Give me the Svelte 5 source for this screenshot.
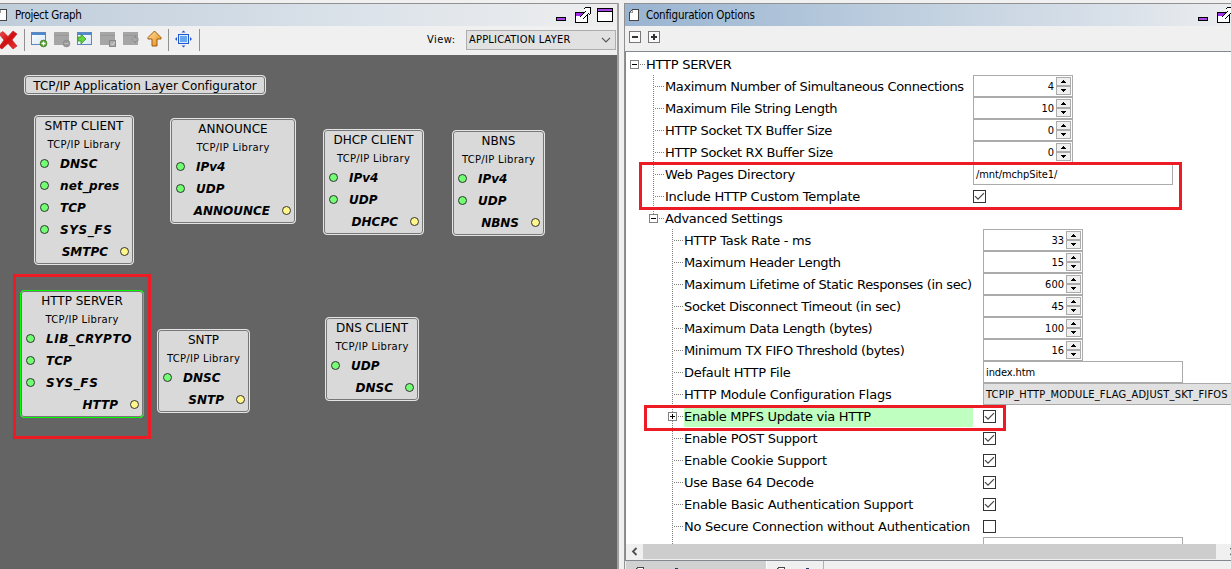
<script>
  const nodes = [
    { name: 'SMTP CLIENT', x: 34, y: 115, w: 100, h: 150, ins: ['DNSC', 'net_pres', 'TCP', 'SYS_FS'], out: 'SMTPC' },
    { name: 'ANNOUNCE', x: 170, y: 118, w: 126, h: 106, ins: ['IPv4', 'UDP'], out: 'ANNOUNCE' },
    { name: 'DHCP CLIENT', x: 323, y: 129, w: 101, h: 106, ins: ['IPv4', 'UDP'], out: 'DHCPC' },
    { name: 'NBNS', x: 452, y: 130, w: 93, h: 106, ins: ['IPv4', 'UDP'], out: 'NBNS' },
    { name: 'HTTP SERVER', x: 20, y: 290, w: 124, h: 128, ins: ['LIB_CRYPTO', 'TCP', 'SYS_FS'], out: 'HTTP', selected: true },
    { name: 'SNTP', x: 157, y: 329, w: 93, h: 84, ins: ['DNSC'], out: 'SNTP' },
    { name: 'DNS CLIENT', x: 325, y: 317, w: 94, h: 84, ins: ['UDP'], out: 'DNSC', satisfied: true }
  ];
  const rows = [
    { level: 0, label: 'HTTP SERVER', box: '-' },
    { level: 1, label: 'Maximum Number of Simultaneous Connections', kind: 'spin', value: '4', tight: true },
    { level: 1, label: 'Maximum File String Length', kind: 'spin', value: '10', tight: true },
    { level: 1, label: 'HTTP Socket TX Buffer Size', kind: 'spin', value: '0', tight: true },
    { level: 1, label: 'HTTP Socket RX Buffer Size', kind: 'spin', value: '0', tight: true },
    { level: 1, label: 'Web Pages Directory', kind: 'text', value: '/mnt/mchpSite1/' },
    { level: 1, label: 'Include HTTP Custom Template', kind: 'check', value: true },
    { level: 1, label: 'Advanced Settings', box: '-', last: true },
    { level: 2, label: 'HTTP Task Rate - ms', kind: 'spin', value: '33' },
    { level: 2, label: 'Maximum Header Length', kind: 'spin', value: '15', tight: true },
    { level: 2, label: 'Maximum Lifetime of Static Responses (in sec)', kind: 'spin', value: '600', tight: true },
    { level: 2, label: 'Socket Disconnect Timeout (in sec)', kind: 'spin', value: '45', tight: true },
    { level: 2, label: 'Maximum Data Length (bytes)', kind: 'spin', value: '100', tight: true },
    { level: 2, label: 'Minimum TX FIFO Threshold (bytes)', kind: 'spin', value: '16', tight: true },
    { level: 2, label: 'Default HTTP File', kind: 'text', value: 'index.htm' },
    { level: 2, label: 'HTTP Module Configuration Flags', kind: 'combo', value: 'TCPIP_HTTP_MODULE_FLAG_ADJUST_SKT_FIFOS' },
    { level: 2, label: 'Enable MPFS Update via HTTP', kind: 'check', value: true, box: '+', lit: true },
    { level: 2, label: 'Enable POST Support', kind: 'check', value: true },
    { level: 2, label: 'Enable Cookie Support', kind: 'check', value: true },
    { level: 2, label: 'Use Base 64 Decode', kind: 'check', value: true },
    { level: 2, label: 'Enable Basic Authentication Support', kind: 'check', value: true },
    { level: 2, label: 'No Secure Connection without Authentication', kind: 'check', value: false },
    { level: 2, label: '', kind: 'text', value: '' }
  ];
  const indent = [20, 39, 58];
</script>

{#snippet doc()}
  <svg class="doc" width="11" height="14" viewBox="0 0 11 14" shape-rendering="crispEdges">
    <path d="M3.5 1.5H9.5V12.5H.5V4.5L3.5 1.5Z" fill="#fff" stroke="#444" />
    <path d="M1 4.5H3.5V2" fill="none" stroke="#999" />
  </svg>
{/snippet}

{#snippet controls()}
  <svg width="58" height="18" viewBox="0 0 58 18" shape-rendering="crispEdges">
    <rect x=".5" y="11.5" width="9" height="3" fill="#a846e8" stroke="#000" />
    <rect x="19.5" y="6.5" width="12" height="10" fill="#fff" stroke="#000" />
    <rect x="20" y="7" width="11" height="3" fill="#a030e8" />
    <path d="M23 12L29 6L27 4L29 2H35V8L33 10L31 8L25 14Z" fill="#fff" />
    <path d="M23.500 11.500L29.500 5.500M26.500 13.500L32.500 7.500M27.500 3.500L29.500 1.500H34.500V7.500L32.500 9.500" fill="none" stroke="#000" />
    <rect x="41.500" y="2.500" width="15" height="13" fill="#fff" stroke="#000" />
    <rect x="42" y="3" width="14" height="2" fill="#a846e8" /><path d="M42 5.500H56" stroke="#000" />
  </svg>
{/snippet}

<div class="window">
  <section class="graph">
    <header class="titlebar">
      <span class="cut">{@render doc()}</span>
      <h2>Project Graph</h2>
      {@render controls()}
    </header>
    <div class="toolbar">
      <svg width="205" height="29" viewBox="0 0 205 29">
        <defs>
          <linearGradient id="red" x2="1" y2="1"><stop stop-color="#f05050" /><stop offset=".5" stop-color="#d01010" /><stop offset="1" stop-color="#ee3a38" /></linearGradient>
          <linearGradient id="amber" x2="1" y2="1"><stop stop-color="#ffe0a0" /><stop offset="1" stop-color="#e68910" /></linearGradient>
          <linearGradient id="sky" x2="1" y2="1"><stop stop-color="#fff" /><stop offset="1" stop-color="#d5e7f7" /></linearGradient>
        </defs>
        <path d="M-1 8L3 5.500L8 10.500L13 5L17 8L12 14L17 20L13 23L8 17.500L2 23L-1 21L4 14Z" fill="url(#red)" stroke="#b81414" stroke-width=".6" />
        <path d="M24.500 3V25M168.500 3V25M199.500 3V25" stroke="#909090" />
        <g fill="url(#sky)" stroke="#5f86bd"><rect x="31.500" y="6.500" width="14" height="12" /><rect x="77.500" y="6.500" width="14" height="12" /></g>
        <path d="M31 8H46M77 8H92" stroke="#4e89d2" stroke-width="2" />
        <circle cx="43.500" cy="17.500" r="3.400" fill="#5d9f36" stroke="#397c20" stroke-width=".7" /><path d="M41.500 17.500H45.500M43.500 15.500V19.500" stroke="#fff" stroke-width="1.300" />
        <path d="M78 11H81V8L86 13L81 18V15H78Z" fill="#63d340" stroke="#36961f" stroke-width=".8" />
        <g fill="#a5a5a5"><rect x="54" y="6" width="15" height="13" rx=".5" /><rect x="100" y="6" width="15" height="13" /><rect x="123" y="6" width="15" height="13" /></g>
        <path d="M54 9.500H69M100 9.500H115M123 9.500H138" stroke="#989898" />
        <circle cx="66.500" cy="17.500" r="3.400" fill="#999" stroke="#888" stroke-width=".7" /><path d="M64.500 17.500H68.500" stroke="#c0c0c0" />
        <rect x="109.500" y="14.500" width="6" height="6" fill="#aaa" stroke="#888" /><path d="M111 17.500L112.500 19L115 16" fill="none" stroke="#ddd" />
        <path d="M132 13.500L135.500 10V12H138V15H135.500V17Z" fill="#aaa" stroke="#888" stroke-width=".8" />
        <path d="M154.500 5L161 11.500V13H157V20H152V13H148V11.500Z" fill="url(#amber)" stroke="#9d5b10" />
        <rect x="178.500" y="8.500" width="10" height="9" fill="#dcecff" stroke="#2455d0" /><rect x="180" y="10" width="7" height="6" fill="#65a7f2" />
        <path d="M181.500 6.500L183.500 4.500L185.500 6.500ZM181.500 19.500L183.500 21.500L185.500 19.500ZM177 11L175 13L177 15ZM190 11L192 13L190 15Z" fill="#2455d0" />
      </svg>
      <label>View:</label>
      <div class="view">APPLICATION LAYER
        <svg width="10" height="6" viewBox="0 0 10 6"><path d="M1 .8L5 4.800L9 .8" fill="none" stroke="#555" stroke-width="1.200" /></svg>
      </div>
    </div>
    <div class="canvas"></div>
  </section>

  <section class="options">
    <header class="titlebar active">
      {@render doc()}
      <h2>Configuration Options</h2>
      {@render controls()}
    </header>
    <div class="toolbar small">
      <svg width="32" height="12" viewBox="0 0 32 12" shape-rendering="crispEdges">
        <rect x=".5" y=".5" width="11" height="11" fill="#fafafa" stroke="#777" /><rect x="19.500" y=".5" width="11" height="11" fill="#fafafa" stroke="#777" />
        <path d="M3 6H9M22 6H28M25 3V9" stroke="#333" stroke-width="2" />
      </svg>
    </div>
    <div class="tree">
      {#each rows as r}
        <div class="row l{r.level}">
          <svg width={indent[r.level]} height="22" shape-rendering="crispEdges" fill="none" stroke="#808080">
            {#if r.level}
              <path d="M{r.level * 19 + 8.5} 0V{r.last ? 11 : 22}" stroke-dasharray="1 1" />
            {/if}
            {#if r.label}
              <path d="M{r.level * 19 + 10} 11.500H{r.level * 19 + 19}" stroke-dasharray="1 1" />
            {/if}
            {#if r.box}
              <rect x={r.level * 19 + 4.5} y="7.500" width="8" height="8" fill="#fff" stroke="#808080" />
              <path d="M{r.level * 19 + 6} 11.500h5" stroke="#000" />
              {#if r.box === '+'}<path d="M{r.level * 19 + 8.5} 9v5" stroke="#000" />{/if}
            {/if}
          </svg>
          <span class="name" class:lit={r.lit} class:tight={r.tight}>{r.label}</span>
          {#if r.kind === 'spin'}
            <div class="field spin"><span>{r.value}</span>
              <svg width="15" height="18" viewBox="0 0 15 18" shape-rendering="crispEdges">
                <g fill="#f0f0f0" stroke="#ababab"><rect x=".5" y=".5" width="14" height="8" /><rect x=".5" y="9.500" width="14" height="8" /></g>
                <path d="M7 3h1v1h1v1h1v1H5V5h1V4h1ZM5 12h5v1H9v1H8v1H7v-1H6v-1H5Z" fill="#000" stroke="none" />
              </svg>
            </div>
          {:else if r.kind === 'text'}
            <div class="field text">{r.value}</div>
          {:else if r.kind === 'combo'}
            <div class="field combo">{r.value}</div>
          {:else if r.kind === 'check'}
            <svg width="13" height="13" viewBox="0 0 13 13">
              <rect x=".5" y=".5" width="12" height="12" fill="#fff" stroke="#333" />
              {#if r.value}<path d="M2 6.200L5 9.200L11 3.200" fill="none" stroke="#444" stroke-width="1.200" />{/if}
            </svg>
          {/if}
        </div>
      {/each}
    </div>
    <div class="scroll">
      <svg width="17" height="15" viewBox="0 0 17 15"><path d="M10.500 4L7 7.500L10.500 11" fill="none" stroke="#505050" stroke-width="1.800" /></svg>
      <div class="thumb"></div>
      <svg width="17" height="15" viewBox="0 0 17 15"><path d="M14.500 4L18 7.500L14.500 11" fill="none" stroke="#505050" stroke-width="1.800" /></svg>
    </div>
    <footer>
      <div class="tab on">{@render doc()}<i></i></div>
      <div class="tab">{@render doc()}<i></i></div>
    </footer>
  </section>

  <div class="caption">TCP/IP Application Layer Configurator</div>
  {#each nodes as n}
    <article class="node" class:selected={n.selected} style="left:{n.x}px;top:{n.y}px;width:{n.w}px;height:{n.h}px">
      <h3>{n.name}</h3>
      <p>TCP/IP Library</p>
      {#each n.ins as port}
        <div class="port"><b class="dot"></b><span class:wide={port.includes('_')} class:caps={port.includes('_') && port === port.toUpperCase()}>{port}</span></div>
      {/each}
      <div class="port out"><span>{n.out}</span><b class="dot" class:yellow={!n.satisfied}></b></div>
    </article>
  {/each}
  <div class="mark m1"></div>
  <div class="mark m2"></div>
  <div class="mark m3"></div>
</div>

<style>
  :global(body) { margin: 0; overflow: hidden; }
  * { box-sizing: border-box; }
  svg { display: block; flex: none; }
  .window { position: relative; width: 1231px; height: 569px; padding-top: 3px; display: flex; gap: 5px; overflow: hidden; background: #f0f0f0; color: #000; font: 11px "DejaVu Sans Condensed", "DejaVu Sans", sans-serif; }
  section { display: flex; flex-direction: column; height: 566px; flex: none; overflow: hidden; }
  .graph { width: 619px; border-right: 2px solid #a0a0a0; }
  .options { width: 632px; border-left: 1px solid #919191; }
  .titlebar { display: flex; align-items: center; height: 23px; flex: none; border-top: 1px solid #919191; background: linear-gradient(90deg, #bfcddb, #dce3ea 60%, #eee); padding-right: 3px; }
  .titlebar.active { background: linear-gradient(90deg, #99b4d1, #c5d3e1 52%, #dbe2ea 80%, #f0f0f0); padding: 0 0 0 4px; }
  h2 { font-size: 11.5px; font-weight: 400; margin: 0 auto 0 7px; letter-spacing: -.3px; }
  .active h2 { margin-left: 6px; letter-spacing: -.22px; }
  .cut { width: 8px; display: flex; justify-content: flex-end; overflow: hidden; }
  .toolbar { display: flex; align-items: center; height: 29px; flex: none; }
  .toolbar.small { height: 25px; padding: 0 0 3px 4px; }
  .toolbar label { margin-left: 222px; width: 39px; letter-spacing: .45px; padding-bottom: 2px; }
  .view { width: 150px; height: 20px; display: flex; align-items: center; justify-content: space-between; background: #e1e1e1; border: 1px solid #adadad; padding: 0 4px 1px 2px; letter-spacing: .2px; margin-bottom: 1px; }
  .canvas { flex: 1; background: #646464; }
  .tree { height: 493px; flex: none; overflow: hidden; background: #fff; border-top: 1px solid #828790; border-left: 1px solid #828790; padding-top: 1px; }
  .row { display: flex; align-items: center; height: 22px; }
  .name { font: 13px/24px "DejaVu Sans", sans-serif; letter-spacing: -.25px; white-space: pre; width: 289px; margin-right: 10px; height: 22px; flex: none; }
  .name.tight { letter-spacing: -.37px; }
  .l1 .name { width: 298px; }
  .lit { background: #bfffbf; letter-spacing: -.3px; }
  .field { height: 22px; flex: none; border: 1px solid #ababab; background: #fff; display: flex; align-items: center; white-space: nowrap; }
  .spin { width: 100px; justify-content: flex-end; gap: 2px; padding-right: 1px; }
  .text { width: 200px; padding-left: 2px; letter-spacing: -.1px; }
  .combo { width: 290px; background: #e1e1e1; padding-left: 2px; letter-spacing: .2px; }
  .scroll { display: flex; height: 17px; flex: none; border-left: 1px solid #828790; border-bottom: 1px solid #828790; padding-bottom: 1px; }
  .thumb { width: 573px; height: 15px; background: #cdcdcd; }
  footer { display: flex; height: 9px; overflow: hidden; padding-left: 1px; }
  .tab { width: 57px; height: 9px; padding: 5px 0 0 8px; border-right: 1px solid #b0b0b0; display: flex; align-items: flex-start; gap: 20px; }
  .tab.on { width: 141px; background: #d1d1d1; border-right: 1px solid #fff; gap: 30px; }
  .tab i { width: 3px; height: 1px; margin-top: 2px; background: #233a6a; }

  .caption, .node { position: absolute; background: #d9d9d9; border: 1px solid #e4e4e4; border-radius: 4px; box-shadow: inset 0 0 0 1px #777; }
  .caption { left: 24px; top: 75px; width: 242px; height: 20px; font: 12px/20px "DejaVu Sans", sans-serif; letter-spacing: -.03px; text-align: center; white-space: nowrap; }
  .node.selected { border-color: #0f0; }
  .node h3 { font: 400 12px/20px "DejaVu Sans", sans-serif; margin: 0; height: 20px; text-align: center; white-space: nowrap; }
  .node p { font: 10px/18px "DejaVu Sans", sans-serif; letter-spacing: .3px; margin: 0; height: 16px; text-align: center; white-space: nowrap; }
  .port { display: flex; align-items: center; gap: 11px; height: 22px; padding-left: 5px; font: italic bold 12px/24px "DejaVu Sans", sans-serif; }
  .port span { height: 22px; }
  .port.out { justify-content: flex-end; gap: 12px; padding: 0 4px 0 0; }
  .wide { letter-spacing: .15px; }
  .caps { letter-spacing: .6px; }
  .dot { width: 9px; height: 9px; flex: none; border-radius: 50%; border: 1px solid #333; background: #73ff73; }
  .yellow { background: #fff68c; }
  .mark { position: absolute; border: 3px solid #ed1c24; }
  .m1 { left: 13px; top: 274px; width: 138px; height: 165px; }
  .m2 { left: 639px; top: 162px; width: 543px; height: 48px; }
  .m3 { left: 644px; top: 405px; width: 362px; height: 26px; }
</style>
